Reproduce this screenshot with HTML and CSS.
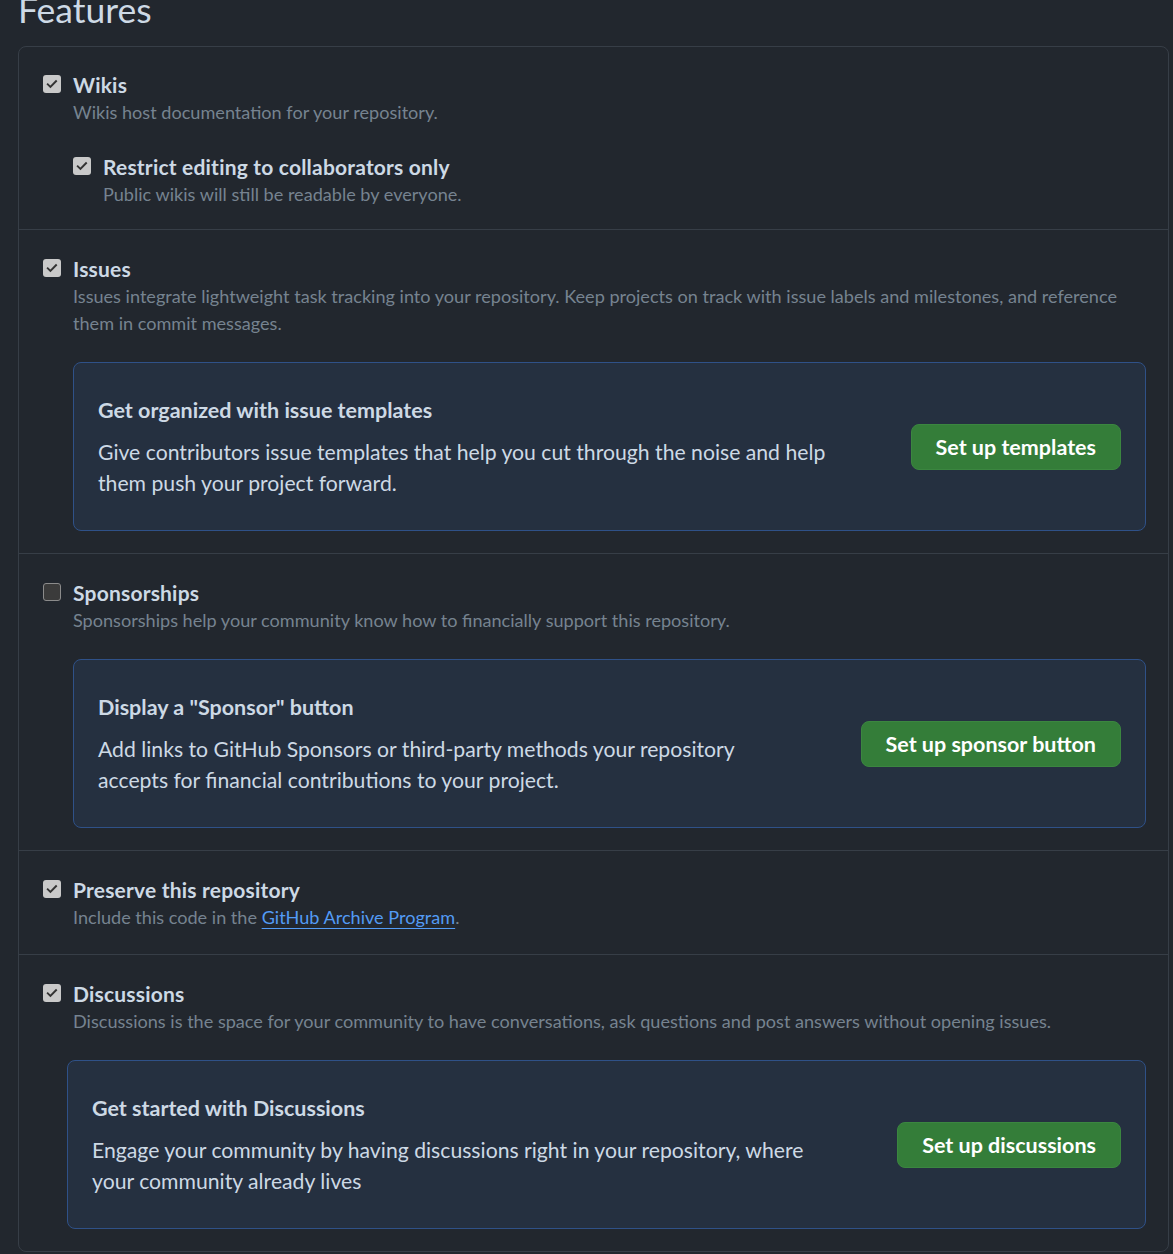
FILE: index.html
```html
<!DOCTYPE html>
<html lang="en">
<head>
<meta charset="utf-8">
<title>Features</title>
<link rel="stylesheet" href="styles.css">
</head>
<body>
<div class="page">
  <h1 class="page-title">Features</h1>
  <div class="box">
    <div class="row row-wiki">
      <div class="opt">
        <span class="cb cb-on"><svg viewBox="0 0 16 16" width="14" height="14"><path d="M3.2 8.4l3 3 6.4-6.6" fill="none" stroke="#333" stroke-width="2.2" stroke-linecap="square"/></svg></span>
        <div class="opt-body">
          <div class="opt-title">Wikis</div>
          <div class="opt-desc">Wikis host documentation for your repository.</div>
          <div class="opt sub">
            <span class="cb cb-on"><svg viewBox="0 0 16 16" width="14" height="14"><path d="M3.2 8.4l3 3 6.4-6.6" fill="none" stroke="#333" stroke-width="2.2" stroke-linecap="square"/></svg></span>
            <div class="opt-body">
              <div class="opt-title">Restrict editing to collaborators only</div>
              <div class="opt-desc">Public wikis will still be readable by everyone.</div>
            </div>
          </div>
        </div>
      </div>
    </div>

    <div class="row">
      <div class="opt">
        <span class="cb cb-on"><svg viewBox="0 0 16 16" width="14" height="14"><path d="M3.2 8.4l3 3 6.4-6.6" fill="none" stroke="#333" stroke-width="2.2" stroke-linecap="square"/></svg></span>
        <div class="opt-body">
          <div class="opt-title">Issues</div>
          <div class="opt-desc">Issues integrate lightweight task tracking into your repository. Keep projects on track with issue labels and milestones, and reference them in commit messages.</div>
          <div class="card">
            <div class="card-text">
              <div class="card-title">Get organized with issue templates</div>
              <div class="card-body">Give contributors issue templates that help you cut through the noise and help them push your project forward.</div>
            </div>
            <button class="btn">Set up templates</button>
          </div>
        </div>
      </div>
    </div>

    <div class="row">
      <div class="opt">
        <span class="cb cb-off"></span>
        <div class="opt-body">
          <div class="opt-title">Sponsorships</div>
          <div class="opt-desc">Sponsorships help your community know how to financially support this repository.</div>
          <div class="card">
            <div class="card-text">
              <div class="card-title">Display a "Sponsor" button</div>
              <div class="card-body">Add links to GitHub Sponsors or third-party methods your repository accepts for financial contributions to your project.</div>
            </div>
            <button class="btn">Set up sponsor button</button>
          </div>
        </div>
      </div>
    </div>

    <div class="row row-text">
      <div class="opt">
        <span class="cb cb-on"><svg viewBox="0 0 16 16" width="14" height="14"><path d="M3.2 8.4l3 3 6.4-6.6" fill="none" stroke="#333" stroke-width="2.2" stroke-linecap="square"/></svg></span>
        <div class="opt-body">
          <div class="opt-title">Preserve this repository</div>
          <div class="opt-desc">Include this code in the <a class="link" href="#">GitHub Archive Program</a>.</div>
        </div>
      </div>
    </div>

    <div class="row">
      <div class="opt">
        <span class="cb cb-on"><svg viewBox="0 0 16 16" width="14" height="14"><path d="M3.2 8.4l3 3 6.4-6.6" fill="none" stroke="#333" stroke-width="2.2" stroke-linecap="square"/></svg></span>
        <div class="opt-body">
          <div class="opt-title">Discussions</div>
          <div class="opt-desc">Discussions is the space for your community to have conversations, ask questions and post answers without opening issues.</div>
          <div class="card card-wide">
            <div class="card-text">
              <div class="card-title">Get started with Discussions</div>
              <div class="card-body">Engage your community by having discussions right in your repository, where your community already lives</div>
            </div>
            <button class="btn">Set up discussions</button>
          </div>
        </div>
      </div>
    </div>
  </div>
</div>
</body>
</html>
```

FILE: styles.css
```css
html, body {
  margin: 0;
  padding: 0;
  background: #22272e;
}
body {
  font-family: Lato, "Open Sans", "Liberation Sans", sans-serif;
  color: #cdd9e5;
  overflow: hidden;
}
.page {
  padding: 0 4px 0 18px;
}
.page-title {
  margin: -10px 0 16px 0;
  font-size: 35.5px;
  line-height: 40px;
  font-weight: 400;
  color: #cdd9e5;
}
.box {
  border: 1px solid #373e47;
  border-radius: 8px;
}
.row {
  padding: 25px 22px 22px 24px;
  border-top: 1px solid #373e47;
}
.row:first-child {
  border-top: 0;
}
.row-wiki {
  padding-top: 24px;
  padding-bottom: 21px;
}
.row-text {
  padding-bottom: 23px;
}
.opt {
  display: flex;
  align-items: flex-start;
  gap: 12px;
}
.opt-body {
  flex: 1;
  min-width: 0;
}
.sub {
  margin-top: 27px;
}
.cb {
  flex: none;
  width: 18px;
  height: 18px;
  margin-top: 4px;
  box-sizing: border-box;
  border-radius: 3px;
  display: flex;
  align-items: center;
  justify-content: center;
}
.cb-on {
  background: #c9c9c9;
}
.cb-off {
  background: #3b3b3b;
  border: 1px solid #8b8b8b;
}
.opt-title {
  font-size: 21px;
  line-height: 28px;
  font-weight: 700;
  letter-spacing: 0.2px;
  color: #cdd9e5;
}
.opt-desc {
  font-size: 18.1px;
  line-height: 27px;
  color: #768390;
}
.link {
  color: #539bf5;
  text-decoration: underline;
  text-underline-offset: 4px;
}
.card {
  margin-top: 25px;
  display: flex;
  align-items: center;
  padding: 32px 24px 31px 24px;
  background: #253040;
  border: 1px solid #2f5188;
  border-radius: 8px;
}
.card-wide {
  margin-left: -6px;
}
.card-text {
  flex: 1;
  min-width: 0;
  margin-right: 64px;
}
.card-title {
  font-size: 21.5px;
  line-height: 30px;
  font-weight: 700;
  margin-bottom: 12px;
  color: #cdd9e5;
}
.card-body {
  font-size: 21.2px;
  line-height: 31px;
  color: #cdd9e5;
}
.btn {
  flex: none;
  height: 46px;
  padding: 0 24px;
  font-family: inherit;
  font-size: 21.5px;
  font-weight: 700;
  color: #ffffff;
  background: #347d39;
  border: 1px solid #3b8640;
  border-radius: 8px;
}
```
